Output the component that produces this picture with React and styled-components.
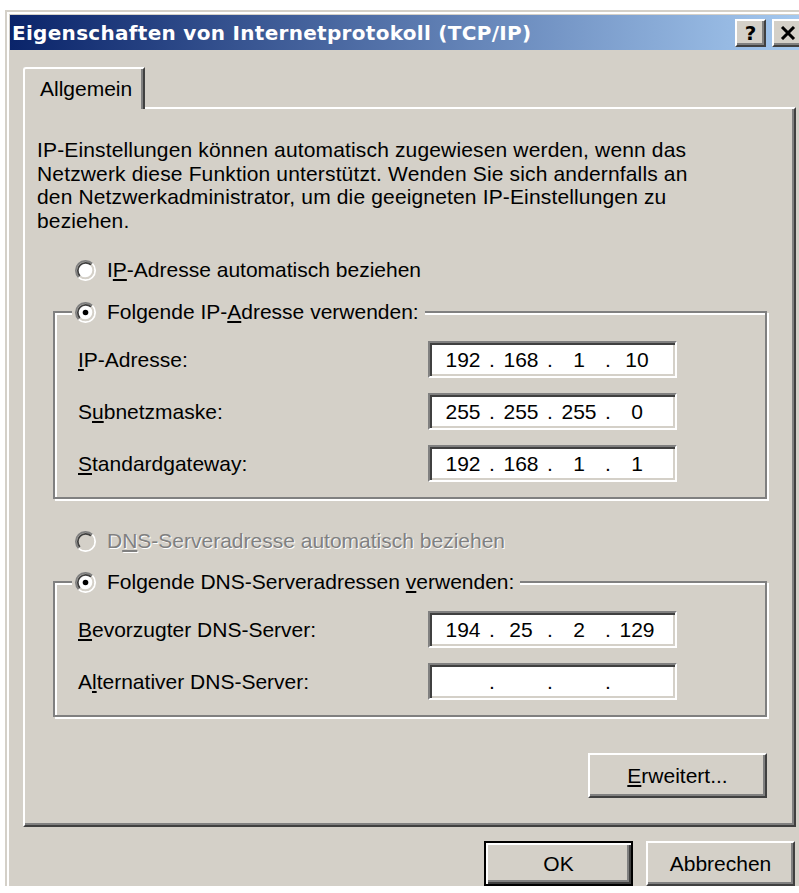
import React from 'react';
import styled, { createGlobalStyle } from 'styled-components';

const GlobalStyle = createGlobalStyle`
  html, body {
    margin: 0;
    padding: 0;
    background: #fff;
    overflow: hidden;
  }
  body {
    width: 799px;
    height: 893px;
    font-family: "Liberation Sans", Arial, sans-serif;
    color: #000;
  }
`;

// Outer window frame
const Window = styled.div`
  margin: 10px 0 0 5px;
  width: 796px;
  padding: 3px 0 0 3px;
  border-top: 2px solid #d4d0c8;
  border-left: 2px solid #d4d0c8;
  box-shadow: inset 2px 2px 0 #fff;
  background: #d4d0c8;
`;

const TitleBar = styled.div`
  height: 35px;
  display: flex;
  align-items: center;
  padding: 0 3px 0 2px;
  background: linear-gradient(to right, #0a246a, #a6caf0);
`;

const TitleText = styled.div`
  flex: 1;
  font-family: "DejaVu Sans", Verdana, sans-serif;
  font-weight: bold;
  font-size: 20px;
  letter-spacing: 0.3px;
  color: #fff;
  white-space: nowrap;
`;

const CaptionButtons = styled.div`
  display: flex;
  gap: 6px;
`;

const CaptionButton = styled.div`
  width: 31px;
  height: 28px;
  box-sizing: border-box;
  display: flex;
  align-items: center;
  justify-content: center;
  background: #d4d0c8;
  border: 2px solid;
  border-color: #fff #404040 #404040 #fff;
  box-shadow: inset -2px -2px 0 #808080;
  font-family: "DejaVu Sans", Verdana, sans-serif;
  font-weight: bold;
  font-size: 20px;
  line-height: 1;
`;

const Client = styled.div`
  padding: 17px 10px 0 13px;
`;

const TabStrip = styled.div`
  display: flex;
`;

const Tab = styled.div`
  position: relative;
  z-index: 1;
  width: 122px;
  height: 42px;
  box-sizing: border-box;
  margin-bottom: -2px;
  padding: 8px 0 0 15px;
  background: #d4d0c8;
  border-top: 2px solid #fff;
  border-left: 2px solid #fff;
  border-right: 2px solid #404040;
  border-top-left-radius: 3px;
  box-shadow: inset -2px 0 0 #808080;
  font-size: 21px;
`;

const Panel = styled.div`
  padding: 29px 12px 27px 12px;
  border: 2px solid;
  border-color: #fff #404040 #404040 #fff;
  box-shadow: inset -2px -2px 0 #808080;
`;

const Intro = styled.p`
  margin: 0;
  font-size: 21px;
  line-height: 23.5px;
  letter-spacing: 0.15px;
  white-space: nowrap;
`;

const Key = styled.span`
  text-decoration: underline;
  text-underline-offset: 2px;
`;

const RadioRow = styled.div`
  display: flex;
  align-items: center;
  gap: 11px;
  height: 24px;
  margin: ${p => p.$top}px 0 0 38px;
  font-size: 21px;
  white-space: nowrap;
  color: ${p => (p.$disabled ? '#808080' : '#000')};
  text-shadow: ${p => (p.$disabled ? '1px 1px 0 #fff' : 'none')};
`;

const Group = styled.fieldset`
  margin: ${p => p.$top}px 15px 0 16px;
  padding: 0 0 15px 0;
  border: 2px solid #808080;
  box-shadow: inset 2px 2px 0 #fff, 2px 2px 0 #fff;
  min-width: 0;
`;

const Legend = styled.legend`
  margin-left: 17px;
  padding: 0 6px 0 3px;
  background: #d4d0c8;
  display: flex;
  align-items: center;
  gap: 11px;
  height: 24px;
  font-size: 21px;
  white-space: nowrap;
`;

const Fields = styled.div`
  display: grid;
  grid-template-columns: 350px 249px;
  row-gap: 15px;
  margin-top: 17px;
  padding-left: 23px;
`;

const FieldLabel = styled.label`
  font-size: 21px;
  line-height: 37px;
  white-space: nowrap;
`;

const IpBox = styled.div`
  width: 249px;
  height: 37px;
  box-sizing: border-box;
  display: grid;
  grid-template-columns: 44px 14px 44px 14px 44px 14px 44px;
  align-items: center;
  padding-left: 11px;
  background: #fff;
  border: 2px solid;
  border-color: #808080 #fff #fff #808080;
  box-shadow: inset 2px 2px 0 #404040, inset -2px -2px 0 #d4d0c8;
  font-size: 21px;
`;

const Octet = styled.span`
  text-align: center;
`;

const ButtonRow = styled.div`
  display: flex;
  justify-content: flex-end;
  gap: 13px;
  margin: ${p => p.$top}px ${p => p.$right}px 0 0;
`;

const Button = styled.div`
  width: ${p => p.$width}px;
  height: 45px;
  box-sizing: border-box;
  display: flex;
  align-items: center;
  justify-content: center;
  background: #d4d0c8;
  font-size: 21px;
  border: 2px solid;
  border-color: ${p => (p.$default ? '#000' : '#fff #404040 #404040 #fff')};
  box-shadow: ${p =>
    p.$default
      ? 'inset 2px 2px 0 #fff, inset -2px -2px 0 #404040, inset -4px -4px 0 #808080'
      : 'inset -2px -2px 0 #808080'};
`;

const Radio = ({ checked, disabled }) => (
  <svg width="21" height="21" viewBox="0 0 12 12">
    <circle cx="6" cy="6" r="4.5" fill={disabled ? '#d4d0c8' : '#fff'} />
    <path d="M2.11 9.89 A5.5 5.5 0 0 1 9.89 2.11" fill="none" stroke="#808080" strokeWidth="1" />
    <path d="M9.89 2.11 A5.5 5.5 0 0 1 2.11 9.89" fill="none" stroke="#fff" strokeWidth="1" />
    <path d="M2.82 9.18 A4.5 4.5 0 0 1 9.18 2.82" fill="none" stroke="#404040" strokeWidth="1" />
    <path d="M9.18 2.82 A4.5 4.5 0 0 1 2.82 9.18" fill="none" stroke="#d4d0c8" strokeWidth="1" />
    {checked && <circle cx="6" cy="6" r="1.6" fill="#000" />}
  </svg>
);

const CloseGlyph = () => (
  <svg width="16" height="14" viewBox="0 0 16 14">
    <path d="M2 1 L14 13 M14 1 L2 13" stroke="#000" strokeWidth="3" />
  </svg>
);

const IpField = ({ parts }) => (
  <IpBox>
    {parts.map((part, i) => (
      <React.Fragment key={i}>
        {i > 0 && <Octet>.</Octet>}
        <Octet>{part}</Octet>
      </React.Fragment>
    ))}
  </IpBox>
);

export default function App() {
  return (
    <>
      <GlobalStyle />
      <Window>
        <TitleBar>
          <TitleText>Eigenschaften von Internetprotokoll (TCP/IP)</TitleText>
          <CaptionButtons>
            <CaptionButton>?</CaptionButton>
            <CaptionButton><CloseGlyph /></CaptionButton>
          </CaptionButtons>
        </TitleBar>

        <Client>
          <TabStrip>
            <Tab>Allgemein</Tab>
          </TabStrip>

          <Panel>
            <Intro>
              IP-Einstellungen können automatisch zugewiesen werden, wenn das<br />
              Netzwerk diese Funktion unterstützt. Wenden Sie sich andernfalls an<br />
              den Netzwerkadministrator, um die geeigneten IP-Einstellungen zu<br />
              beziehen.
            </Intro>

            <RadioRow $top={26}>
              <Radio />
              <span>I<Key>P</Key>-Adresse automatisch beziehen</span>
            </RadioRow>

            <Group $top={18}>
              <Legend>
                <Radio checked />
                <span>Folgende IP-<Key>A</Key>dresse verwenden:</span>
              </Legend>
              <Fields>
                <FieldLabel><Key>I</Key>P-Adresse:</FieldLabel>
                <IpField parts={['192', '168', '1', '10']} />
                <FieldLabel>S<Key>u</Key>bnetzmaske:</FieldLabel>
                <IpField parts={['255', '255', '255', '0']} />
                <FieldLabel><Key>S</Key>tandardgateway:</FieldLabel>
                <IpField parts={['192', '168', '1', '1']} />
              </Fields>
            </Group>

            <RadioRow $top={30} $disabled>
              <Radio disabled />
              <span>D<Key>N</Key>S-Serveradresse automatisch beziehen</span>
            </RadioRow>

            <Group $top={17}>
              <Legend>
                <Radio checked />
                <span>Folgende DNS-Serveradressen <Key>v</Key>erwenden:</span>
              </Legend>
              <Fields>
                <FieldLabel><Key>B</Key>evorzugter DNS-Server:</FieldLabel>
                <IpField parts={['194', '25', '2', '129']} />
                <FieldLabel>A<Key>l</Key>ternativer DNS-Server:</FieldLabel>
                <IpField parts={['', '', '', '']} />
              </Fields>
            </Group>

            <ButtonRow $top={36} $right={15}>
              <Button $width={179}><span><Key>E</Key>rweitert...</span></Button>
            </ButtonRow>
          </Panel>

          <ButtonRow $top={14} $right={1}>
            <Button $width={149} $default>OK</Button>
            <Button $width={149}>Abbrechen</Button>
          </ButtonRow>
        </Client>
      </Window>
    </>
  );
}
